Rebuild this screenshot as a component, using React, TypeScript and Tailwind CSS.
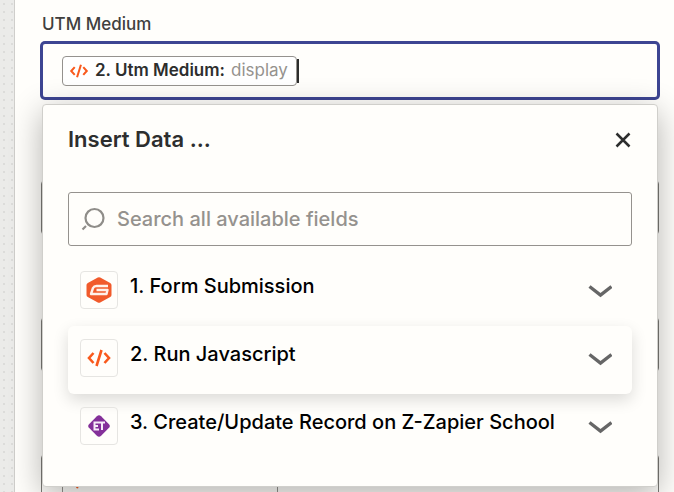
import { useState } from "react";

const steps = [
  { id: 1, title: "1. Form Submission", icon: "gravity" },
  { id: 2, title: "2. Run Javascript", icon: "code" },
  { id: 3, title: "3. Create/Update Record on Z-Zapier School", icon: "et" },
];

const CodeIcon = ({ className }: { className: string }) => (
  <svg viewBox="0 0 24 18" className={className} fill="none" stroke="#f9591c" strokeWidth="2.6" aria-hidden="true">
    <path d="M6.500 4 2 9l4.500 5M17.500 4 22 9l-4.500 5M14.500 1 9.500 17" />
  </svg>
);

const GravityIcon = () => (
  <svg viewBox="0 0 26 26" className="size-[26px]" aria-hidden="true">
    <path
      fill="#f15a2b"
      d="M11.800.5a2.500 2.500 0 0 1 2.400 0l10 5.400a2.500 2.500 0 0 1 1.300 2.200v9.800a2.500 2.500 0 0 1-1.300 2.200l-10 5.400a2.500 2.500 0 0 1-2.400 0l-10-5.400A2.500 2.500 0 0 1 .5 17.900V8.100a2.500 2.500 0 0 1 1.300-2.200z"
    />
    <path
      fill="none"
      stroke="#fff1ea"
      strokeWidth="2.400"
      strokeLinejoin="round"
      d="M22 9H10.500Q8 9 7 11L5 17h15.500l1-4H10.500"
    />
  </svg>
);

const TargetIcon = () => (
  <svg viewBox="0 0 24 24" className="size-6" aria-hidden="true">
    <rect x="3.600" y="3.600" width="16.800" height="16.800" rx="3" fill="#84309a" transform="rotate(45 12 12)" />
    <path fill="none" stroke="#f6ecf8" strokeWidth="2" d="M12 8.500H7.500v7H12M7.500 12H11M11.500 8.500H18M15 8.500v7.500" />
  </svg>
);

const StepIcon = ({ name }: { name: string }) => {
  if (name === "gravity") return <GravityIcon />;
  if (name === "code") return <CodeIcon className="h-[18px] w-6" />;
  return <TargetIcon />;
};

const SearchIcon = () => (
  <svg viewBox="0 0 24 24" className="size-6 shrink-0" fill="none" stroke="#8f8d89" strokeWidth="2.2" aria-hidden="true">
    <circle cx="13.500" cy="11" r="9" />
    <path d="m5 19-3.500 3.500" />
  </svg>
);

const Chevron = () => (
  <svg viewBox="0 0 24 14" className="mt-0.5 h-3.5 w-6 shrink-0" fill="none" stroke="#666" strokeWidth="3.4" aria-hidden="true">
    <path d="m1.500 2.500 11 8.500 11-8.500" />
  </svg>
);

const StepRow = ({ title, icon, active }: { title: string; icon: string; active: boolean }) => (
  <li>
    <button
      type="button"
      className={
        active
          ? "flex h-[68px] w-full items-center rounded-md bg-[#fffefb] pb-1 pl-3 pr-5 text-left shadow-[0_6px_16px_rgba(0,0,0,0.14)]"
          : "flex h-[68px] w-full items-center pb-1 pl-3 pr-5 text-left"
      }
    >
      <span className="flex size-[38px] shrink-0 items-center justify-center rounded-sm border border-[#e6e5e2]">
        <StepIcon name={icon} />
      </span>
      <span className="ml-3 flex-1 pb-2 text-xl font-medium text-black">{title}</span>
      <Chevron />
    </button>
  </li>
);

const InsertData = () => {
  const [query, setQuery] = useState("");

  return (
    <section className="absolute inset-x-px top-full mt-[5px] rounded-sm border border-[#d0cfcb] bg-[#fffefb] px-[25px] pb-6 shadow-[0_8px_32px_rgba(0,0,0,0.3)]">
      <header className="flex h-[87px] items-center justify-between pb-[18px]">
        <h2 className="text-[22px] font-semibold text-[#2d2e2e]">Insert Data ...</h2>
        <button type="button" aria-label="Close">
          <svg viewBox="0 0 18 18" className="size-[18px]" fill="none" stroke="#2d2e2e" strokeWidth="2.500" aria-hidden="true">
            <path d="m2.500 2.500 13 13M15.500 2.500l-13 13" />
          </svg>
        </button>
      </header>
      <div className="flex h-[54px] items-center gap-3 rounded-[3px] border border-[#95928e] px-3">
        <SearchIcon />
        <input
          type="search"
          aria-label="Search all available fields"
          placeholder="Search all available fields"
          value={query}
          onChange={(e) => setQuery(e.target.value)}
          className="min-w-0 flex-1 bg-transparent text-xl font-medium text-[#2d2e2e] outline-none placeholder:text-[#95928e]"
        />
      </div>
      <ul className="mt-3">
        {steps.map((step) => (
          <StepRow key={step.id} title={step.title} icon={step.icon} active={step.id === 2} />
        ))}
      </ul>
    </section>
  );
};

// Fields further down the form, mostly covered by the open menu
const CoveredField = ({ chip }: { chip?: boolean }) => (
  <div className="mb-[82px] flex h-[55px] items-center rounded-sm border border-[#7d7b77] px-5">
    {chip && (
      <span className="flex h-[30px] w-[216px] items-center rounded border border-[#95928e] bg-[#fffefb] px-1.5">
        <CodeIcon className="h-3.5 w-5" />
      </span>
    )}
  </div>
);

export default function App() {
  return (
    <div className="flex h-screen overflow-hidden bg-[#ebebe9] bg-[radial-gradient(#dcdcda_1px,transparent_1px)] bg-[size:8px_8px] pl-3.5 font-['Inter',sans-serif]">
      <main className="min-w-0 flex-1 border-l border-[#cfcecb] bg-[#fffefb] pl-[26px] pr-[15px]">
        <label htmlFor="utm-medium" className="flex h-[42px] items-center pl-px pt-1.5 text-[17px] font-medium leading-6 text-[#403f3e]">
          UTM Medium
        </label>
        <div className="relative z-10 mb-[81px]">
          <div className="flex h-[57px] items-center rounded border-2 border-[#3d4592] bg-[#fffefb] px-[19px] ring-1 ring-[#3d4592]">
            <span className="flex h-[30px] shrink-0 items-center whitespace-nowrap rounded border border-[#95928e] bg-white pl-1.5 pr-2 text-[17px]">
              <CodeIcon className="mr-1.5 h-3.5 w-5" />
              <span className="font-semibold text-[#2d2e2e]">2. Utm Medium:</span>
              <span className="ml-1.5 text-[#95928e]">display</span>
            </span>
            <span className="h-6 w-0.5 shrink-0 bg-[#2d2e2e]" />
            <input id="utm-medium" type="text" className="min-w-0 flex-1 bg-transparent text-[17px] caret-transparent outline-none" />
          </div>
          <InsertData />
        </div>
        <CoveredField />
        <CoveredField />
        <CoveredField chip />
      </main>
    </div>
  );
}
